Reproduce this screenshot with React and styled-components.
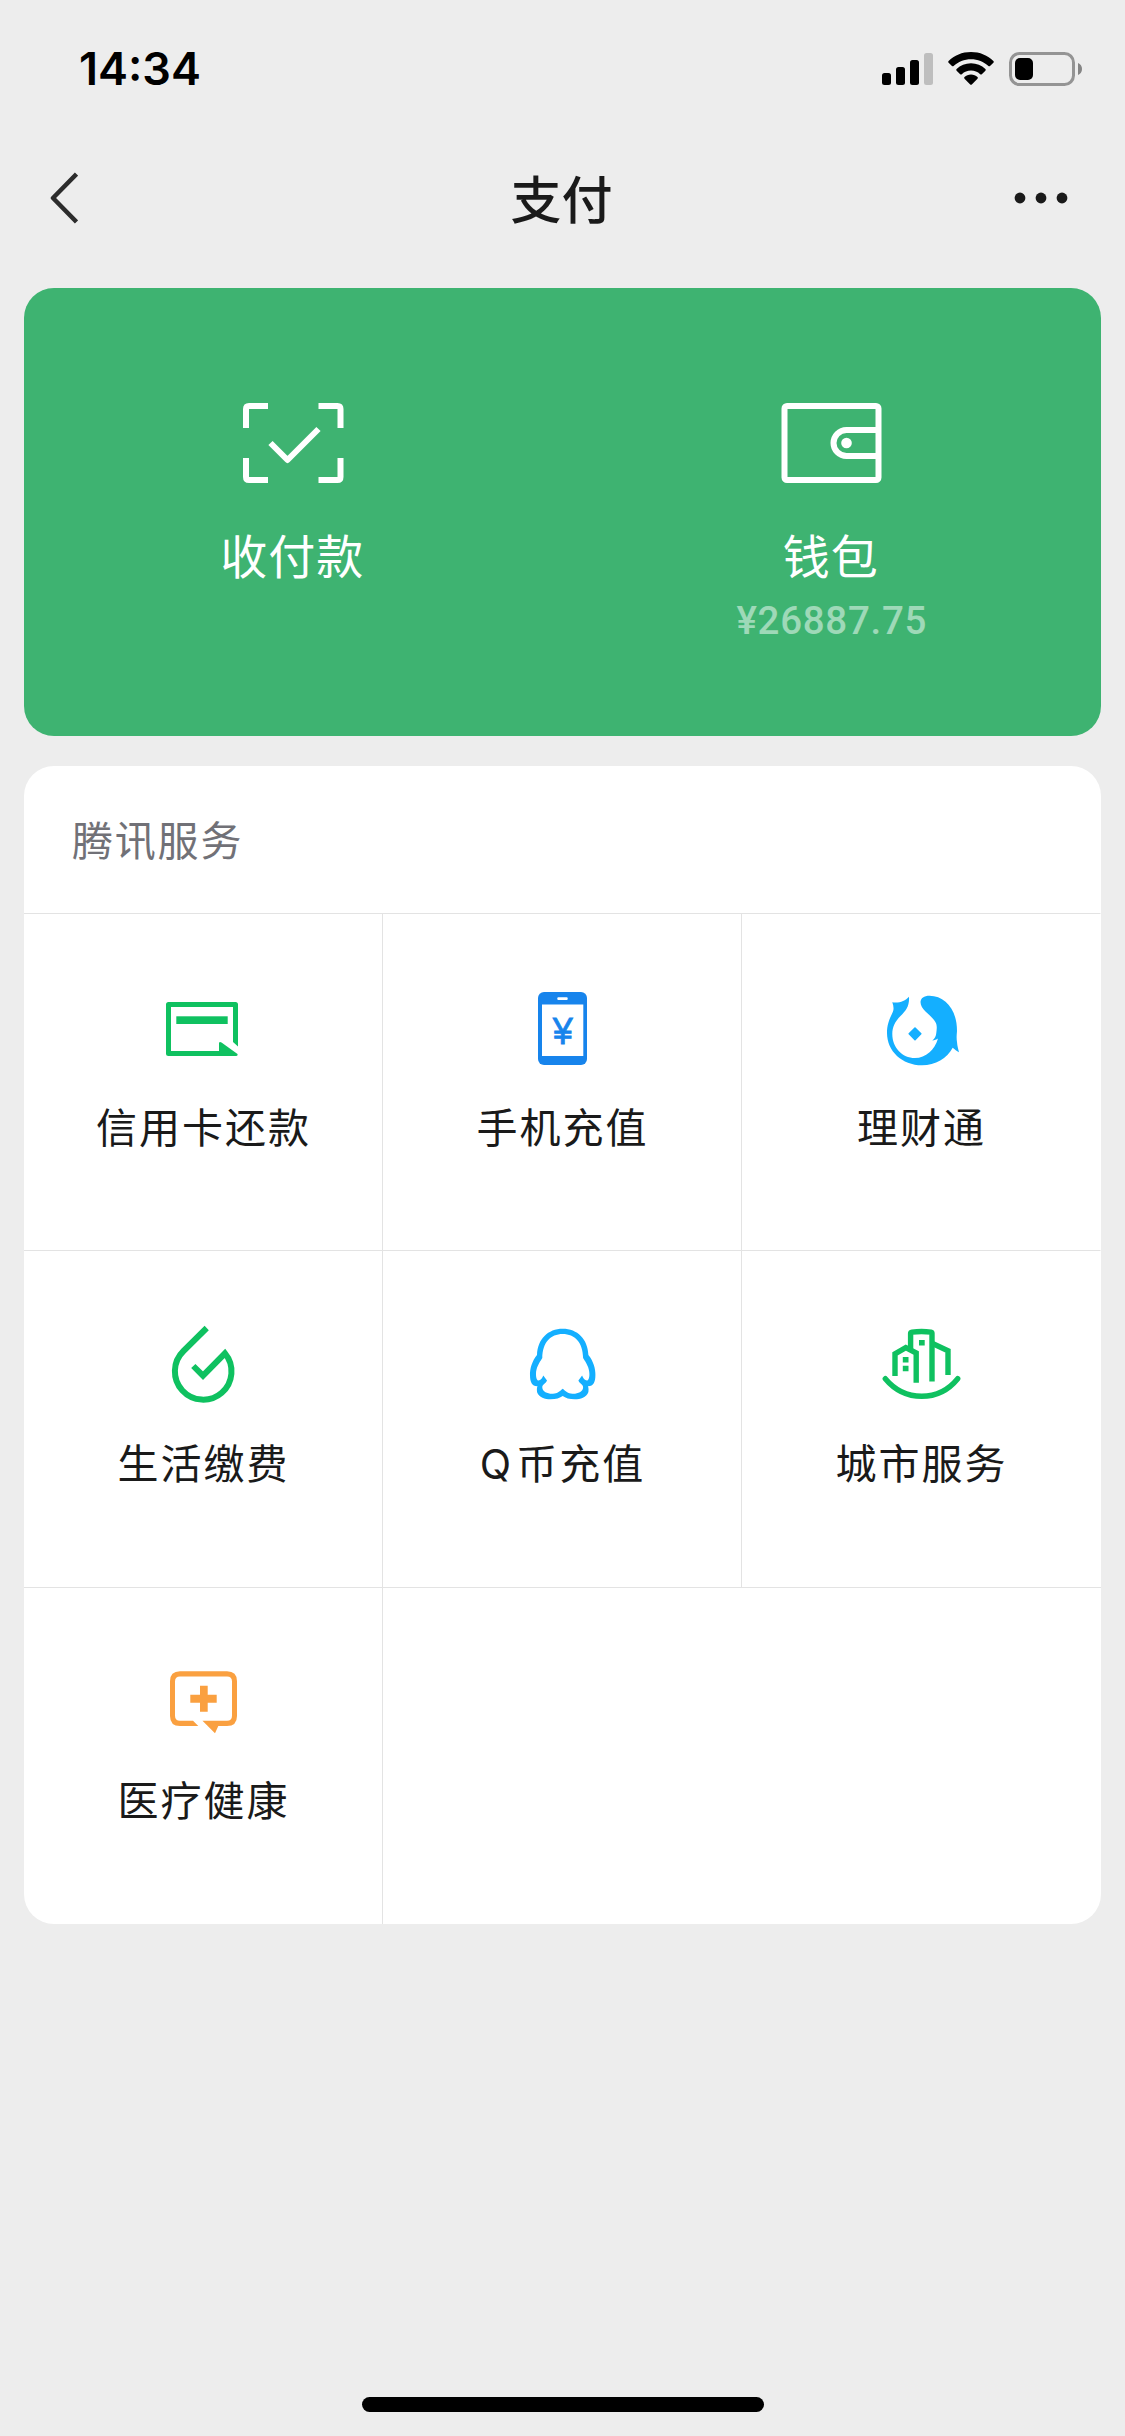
import React from 'react';
import styled, { createGlobalStyle } from 'styled-components';

const GlobalStyle = createGlobalStyle`
  * {
    box-sizing: border-box;
  }

  body {
    margin: 0;
    background: #ededed;
    font-family: 'Noto Sans CJK SC', sans-serif;
    color: #1a1a1a;
  }

  svg {
    display: block;
    flex-shrink: 0;
  }
`;

const Screen = styled.div`
  position: relative;
  display: flex;
  flex-direction: column;
  width: 1125px;
  height: 2436px;
  overflow: hidden;
  background: #ededed;
`;

const StatusBar = styled.header`
  display: flex;
  justify-content: space-between;
  align-items: center;
  height: 132px;
  padding: 6px 42px 0 79px;
`;

const Time = styled.span`
  font-family: Inter, sans-serif;
  font-size: 45px;
  font-weight: 600;
  line-height: 54px;
  color: #000;
`;

const StatusIcons = styled.div`
  display: flex;
  align-items: center;
  gap: 15px;
`;

const NavBar = styled.nav`
  display: grid;
  grid-template-columns: 1fr auto 1fr;
  align-items: center;
  height: 132px;
  padding: 0 57px 0 55px;
`;

const NavBack = styled.div`
  margin-left: -9px;
`;

const NavTitle = styled.h1`
  margin: 0;
  padding-bottom: 3px;
  font-size: 51px;
  font-weight: 500;
  line-height: 72px;
`;

const NavMore = styled.div`
  justify-self: end;
`;

const Content = styled.main`
  display: flex;
  flex-direction: column;
  gap: 30px;
  padding: 24px 24px 0;
`;

const WalletCard = styled.section`
  display: grid;
  grid-template-columns: 1fr 1fr;
  height: 448px;
  border-radius: 30px;
  background: #3eb371;
  color: #fff;
`;

const WalletItem = styled.div`
  display: flex;
  flex-direction: column;
  align-items: center;
  padding-top: 115px;
`;

const WalletLabel = styled.span`
  margin: 37px 2px 0 0;
  font-size: 47px;
  line-height: 68px;
  letter-spacing: 1px;
`;

const Balance = styled.span`
  margin-top: 9px;
  font-family: Roboto, sans-serif;
  font-size: 38.5px;
  font-weight: 500;
  line-height: 48px;
  letter-spacing: 0.7px;
  color: rgba(255, 255, 255, 0.5);
`;

const ServicePanel = styled.section`
  height: 1158px;
  border-radius: 30px;
  background: #fff;
  overflow: hidden;
`;

const PanelTitle = styled.h2`
  margin: 0;
  height: 147px;
  padding-left: 48px;
  font-size: 41px;
  font-weight: 400;
  line-height: 145px;
  letter-spacing: 1.8px;
  color: #717177;
`;

const ServiceGrid = styled.div`
  display: grid;
  grid-template-columns: repeat(3, 359px);
  grid-auto-rows: 337px;
`;

const ServiceCell = styled.div`
  display: flex;
  flex-direction: column;
  align-items: center;
  padding-top: ${props => (props.$firstRow ? '75px' : '74px')};
  border-top: 1px solid #e3e3e3;
  border-right: 1px solid ${props => (props.$divider ? '#e3e3e3' : 'transparent')};
`;

const EmptyCell = styled.div`
  grid-column: span 2;
  border-top: 1px solid #e3e3e3;
`;

const ServiceLabel = styled.span`
  margin-top: 26px;
  padding-left: 1px;
  font-size: 41px;
  line-height: 60px;
  letter-spacing: 2px;
`;

const Latin = styled.span`
  margin-right: 3px;
  font-family: Inter, sans-serif;
  line-height: 1;
`;

const HomeIndicator = styled.div`
  width: 402px;
  height: 15px;
  margin: auto auto 24px;
  border-radius: 8px;
  background: #000;
`;

const SignalIcon = () => (
  <svg width="51" height="34" viewBox="0 0 51 34">
    <rect x="0" y="21" width="9" height="12" rx="2.5" />
    <rect x="14" y="15" width="9" height="18" rx="2.5" />
    <rect x="28" y="8" width="9" height="25" rx="2.5" />
    <rect x="42" y="1" width="9" height="32" rx="2.5" fill="#bebebe" />
  </svg>
);

const WifiIcon = () => (
  <svg width="46" height="34" viewBox="0 0 46 34">
    <path d="M23 0C31.8 0 39.8 3.4 45.4 9Q46.2 9.8 45.4 10.7L42 14Q41.2 14.7 40.4 14C35.8 9.6 29.7 7.2 23 7.2S10.2 9.6 5.6 14Q4.8 14.7 4 14L.6 10.7Q-.2 9.8.6 9C6.2 3.4 14.2 0 23 0Z" />
    <path d="M23 11.3C28.6 11.3 33.6 13.5 37.4 17Q38.2 17.9 37.4 18.7L33.8 22.2Q33 22.9 32.2 22.2C29.7 20 26.5 18.6 23 18.6S16.3 20 13.8 22.2Q13 22.9 12.2 22.2L8.6 18.7Q7.8 17.9 8.6 17C12.4 13.5 17.4 11.3 23 11.3Z" />
    <path d="M23 22.6C25.6 22.6 27.8 23.5 29.5 25Q30.3 25.9 29.5 26.7L23.8 32.4Q23 33.2 22.2 32.4L16.5 26.7Q15.7 25.9 16.5 25C18.2 23.5 20.4 22.6 23 22.6Z" />
  </svg>
);

const BatteryIcon = () => (
  <svg width="74" height="34" viewBox="0 0 74 34">
    <rect x="1.5" y="1.5" width="63" height="31" rx="9" fill="none" stroke="#949494" strokeWidth="3" />
    <rect x="6" y="6" width="18" height="22" rx="5" />
    <path d="M69 11C71.5 12 73 14.3 73 17S71.5 22 69 23Z" fill="#858585" />
  </svg>
);

const BackIcon = () => (
  <svg width="32" height="54" viewBox="0 0 32 54" fill="none" stroke="#2c2c2c" strokeWidth="4.5" strokeLinejoin="round">
    <path d="M30.5 3L7 27L30.5 51" />
  </svg>
);

const MoreIcon = () => (
  <svg width="54" height="12" viewBox="0 0 54 12" fill="#1a1a1a">
    <circle cx="6" cy="6" r="5.4" />
    <circle cx="27" cy="6" r="5.4" />
    <circle cx="48" cy="6" r="5.4" />
  </svg>
);

const ScanIcon = () => (
  <svg width="101" height="80" viewBox="0 0 101 80" fill="none" stroke="#fff" strokeWidth="6">
    <path d="M3 25V6Q3 3 6 3H25M75.5 3H94.5Q97.5 3 97.5 6V25M97.5 55V74Q97.5 77 94.5 77H75.5M25 77H6Q3 77 3 74V55" />
    <path d="M27.5 40L44.5 57L75.5 26" strokeLinejoin="round" />
  </svg>
);

const WalletIcon = () => (
  <svg width="101" height="80" viewBox="0 0 101 80" fill="none" stroke="#fff" strokeWidth="6">
    <rect x="3.5" y="3" width="94" height="74" rx="2.5" />
    <path d="M97 27H65.5A13 13 0 0 0 65.5 53H97" />
    <circle cx="65.5" cy="40" r="5.3" fill="#fff" stroke="none" />
  </svg>
);

const CardIcon = () => (
  <svg width="80" height="80" viewBox="0 0 80 80" fill="#0fc160">
    <path d="M5.5 13H72.5Q75 13 75 15.5V57.5L70 53V18H8V62H56V54Q56.5 52.3 58.5 53.5L74.5 65Q75 67 73 67H5.5Q3 67 3 64.5V15.5Q3 13 5.5 13Z" />
    <rect x="13.3" y="27.3" width="51.4" height="7.7" />
  </svg>
);

const YenText = styled.text`
  font-family: 'Liberation Sans', sans-serif;
  font-size: 36px;
  stroke: #1784ec;
  stroke-width: 0.8px;
`;

const PhoneIcon = () => (
  <svg width="80" height="80" viewBox="0 0 80 80" fill="#1784ec">
    <rect x="16" y="3" width="49" height="73" rx="6" />
    <rect x="20" y="15.5" width="41.3" height="51.5" fill="#fff" />
    <rect x="35.3" y="8.3" width="10.4" height="2.7" rx="1" fill="#fff" />
    <YenText x="40.7" y="55" textAnchor="middle">¥</YenText>
  </svg>
);

const FishIcon = () => (
  <svg width="80" height="80" viewBox="0 0 80 80" fill="#14afff">
    <path d="M11.3 13.3C18 14.5 24 12 28 7.7C28.6 17 25 21.5 19.5 27C14 32.5 11.3 38 11.3 45C11.3 58.5 21 69 34 69C45 69 53.5 61 57 49.5C55.5 50.6 53.5 51.3 51.3 51.5C53.8 49.5 55 47.5 55.3 44C55.6 41 56.2 38.5 55.3 35C54 30.5 49 27 44.5 22.5C41.5 19.5 39.5 16.5 39.5 13C39.7 9 43 6.7 48.5 6.7C64 7 76 20 76 42C75.5 47 75.5 50 76 53C76.3 57 77.3 60.5 78 63.3C75.5 62 74 60.5 71.7 58.8C66 69.5 54.5 76.3 41 76.3C21 76.3 6 62 6 44C6 34 9.5 28 12 22.5C13 19.5 12.5 16.5 11.3 13.3Z" />
    <path d="M34 39L39.8 44.8L34 50.6L28.2 44.8Z" stroke="#14afff" strokeWidth="1.6" strokeLinejoin="round" />
  </svg>
);

const DropletIcon = () => (
  <svg width="80" height="80" viewBox="0 0 80 80" fill="none" stroke="#0fc160" strokeWidth="6">
    <path d="M43.7 3L20.5 26A28.3 28.3 0 1 0 62 28.3L40 50.7L30.3 41" />
  </svg>
);

const PenguinIcon = () => (
  <svg width="80" height="80" viewBox="0 0 80 80" fill="#14afff" fillRule="evenodd">
    <path d="M40.7 3.7C26 3.7 15.5 14 15 30C10 36 7.8 44 8 50C8 57 10 61.5 15.5 61.3C14.5 63 15 66 15 67C17 72.5 23 74.3 28.5 74.3C34 74.3 38 73 40.7 71C43.4 73 47.4 74.3 52.9 74.3C58.4 74.3 64.4 72.5 66.4 67C66.4 66 66.9 63 65.9 61.3C71.4 61.5 73.4 57 73.4 50C73.6 44 71.4 36 66.4 30C65.9 14 55.4 3.7 40.7 3.7ZM40.7 9C28.5 9 20.5 17.5 20.3 33C17 38 14 43 14 49C14 53 15 55.5 16.5 55.5C18.5 55.5 20.5 53 21.3 50.5L25 55.5C24 58.5 20 59.5 20.3 62.5C20.5 67 26 69 31 68.7C35.5 68.5 38 66 40.7 63.7C43.4 66 45.9 68.5 50.4 68.7C55.4 69 60.9 67 61.1 62.5C61.4 59.5 57.4 58.5 56.4 55.5L60.1 50.5C60.9 53 62.9 55.5 64.9 55.5C66.4 55.5 67.4 53 67.4 49C67.4 43 64.4 38 61.1 33C60.9 17.5 52.9 9 40.7 9Z" />
  </svg>
);

const CityIcon = () => (
  <svg width="80" height="80" viewBox="0 0 80 80" fill="none" stroke="#0fc160" strokeWidth="5.4">
    <path d="M29.6 24V8.5Q29.6 7.3 31 7.1Q40.5 5.9 50 7.1Q51 7.3 51 8.5V56.5" />
    <path d="M14 51V28.8L24.8 22.6L35.2 28V57.8" />
    <path d="M51 18.3L67 25.8V50" />
    <path d="M4.3 53.7Q19 71.3 40.7 71.3T76.7 53.7" strokeLinecap="round" />
    <path d="M38 17.7H43.7M21.8 34.7H27.5M21.8 43.5H27.5" />
  </svg>
);

const MedicalIcon = () => (
  <svg width="80" height="80" viewBox="0 0 80 80" fill="#faa040">
    <path d="M17 9.3H64Q74 9.3 74 19.3V54Q74 64 64 64H55.3L52 71.3L39.5 58.7H64Q69 58.7 69 53.7V19.6Q69 14.6 64 14.6H17Q12 14.6 12 19.6V53.7Q12 58.7 17 58.7H30L35.3 64H17Q7 64 7 54V19.3Q7 9.3 17 9.3Z" />
    <path d="M37 23.7H44.7V32.7H53.7V40.7H44.7V49.7H37V40.7H27.3V32.7H37Z" />
  </svg>
);

const services = [
  { name: '信用卡还款', icon: <CardIcon /> },
  { name: '手机充值', icon: <PhoneIcon /> },
  { name: '理财通', icon: <FishIcon /> },
  { name: '生活缴费', icon: <DropletIcon /> },
  { latin: 'Q', name: '币充值', icon: <PenguinIcon /> },
  { name: '城市服务', icon: <CityIcon /> },
  { name: '医疗健康', icon: <MedicalIcon /> }
];

export default function App() {
  return (
    <>
      <GlobalStyle />
      <Screen>
        <StatusBar>
          <Time>14:34</Time>
          <StatusIcons>
            <SignalIcon />
            <WifiIcon />
            <BatteryIcon />
          </StatusIcons>
        </StatusBar>

        <NavBar>
          <NavBack>
            <BackIcon />
          </NavBack>
          <NavTitle>支付</NavTitle>
          <NavMore>
            <MoreIcon />
          </NavMore>
        </NavBar>

        <Content>
          <WalletCard>
            <WalletItem>
              <ScanIcon />
              <WalletLabel>收付款</WalletLabel>
            </WalletItem>
            <WalletItem>
              <WalletIcon />
              <WalletLabel>钱包</WalletLabel>
              <Balance>¥26887.75</Balance>
            </WalletItem>
          </WalletCard>

          <ServicePanel>
            <PanelTitle>腾讯服务</PanelTitle>
            <ServiceGrid>
              {services.map((service, index) => (
                <ServiceCell key={service.name} $firstRow={index < 3} $divider={index % 3 !== 2}>
                  {service.icon}
                  <ServiceLabel>
                    {service.latin && <Latin>{service.latin}</Latin>}
                    {service.name}
                  </ServiceLabel>
                </ServiceCell>
              ))}
              <EmptyCell />
            </ServiceGrid>
          </ServicePanel>
        </Content>

        <HomeIndicator />
      </Screen>
    </>
  );
}
